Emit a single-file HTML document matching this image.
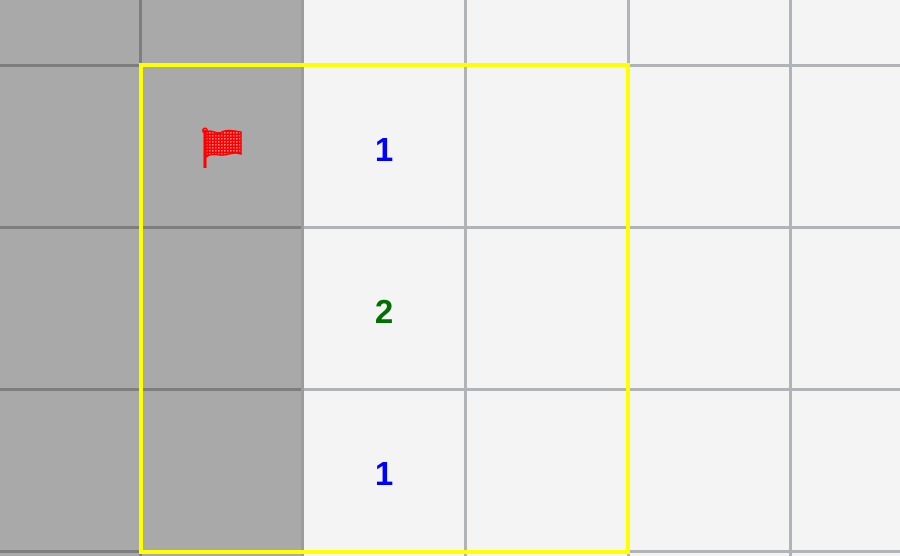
<!DOCTYPE html>
<html><head><style>
body{margin:0;width:900px;height:556px;overflow:hidden;background:#f4f4f4;position:relative;font-family:"Liberation Sans",sans-serif}
.g{position:absolute;left:0;top:0;width:302px;height:556px;background:#a9a9a9}
.v,.h{position:absolute;background:#b0b4b6}
.v{width:3px;top:0;height:556px}
.h{height:3px;left:0;width:900px}
.d{background:#7e7e7e}
.n{position:absolute;font-weight:bold;font-size:33px;width:60px;text-align:center;line-height:32px}
.y{position:absolute;box-sizing:border-box;left:139px;top:63px;width:491px;height:491px;border:4px solid #ffff00}
</style></head><body>
<div class="g"></div>
<div class="h" style="top:64px"></div>
<div class="h" style="top:226px"></div>
<div class="h" style="top:388px"></div>
<div class="h" style="top:550px"></div>
<div class="h d" style="top:64px;width:302px"></div>
<div class="h d" style="top:226px;width:302px"></div>
<div class="h d" style="top:388px;width:302px"></div>
<div class="h d" style="top:550px;width:302px"></div>
<div class="v d" style="left:139px"></div>
<div class="v" style="left:301px;background:#9a9c9e"></div>
<div class="v" style="left:464px"></div>
<div class="v" style="left:627px"></div>
<div class="v" style="left:789px"></div>
<div class="y"></div>
<div class="n" style="left:354px;top:134px;color:#0000ff">1</div>
<div class="n" style="left:354px;top:296px;color:#007000">2</div>
<div class="n" style="left:354px;top:458px;color:#0000ff">1</div>
<svg style="position:absolute;left:200px;top:126px" width="44" height="44" viewBox="0 0 44 44">
<defs><pattern id="p" width="3" height="3" patternUnits="userSpaceOnUse"><rect width="3" height="3" fill="#ff0000"/><rect width="1.5" height="1.5" fill="#ff9090"/></pattern></defs>
<rect x="3.5" y="4" width="3" height="38" fill="#ff0000"/>
<circle cx="5" cy="4.5" r="2.2" fill="none" stroke="#ff0000" stroke-width="1.5"/>
<path d="M6 6 C12 3,16 9,22 6 C26 4,30 4,41 6 L41 28 C32 25,27 30,20 29 C14 28,10 28,6 31 Z" fill="url(#p)" stroke="#ff0000" stroke-width="1.5"/>
</svg>
</body></html>
